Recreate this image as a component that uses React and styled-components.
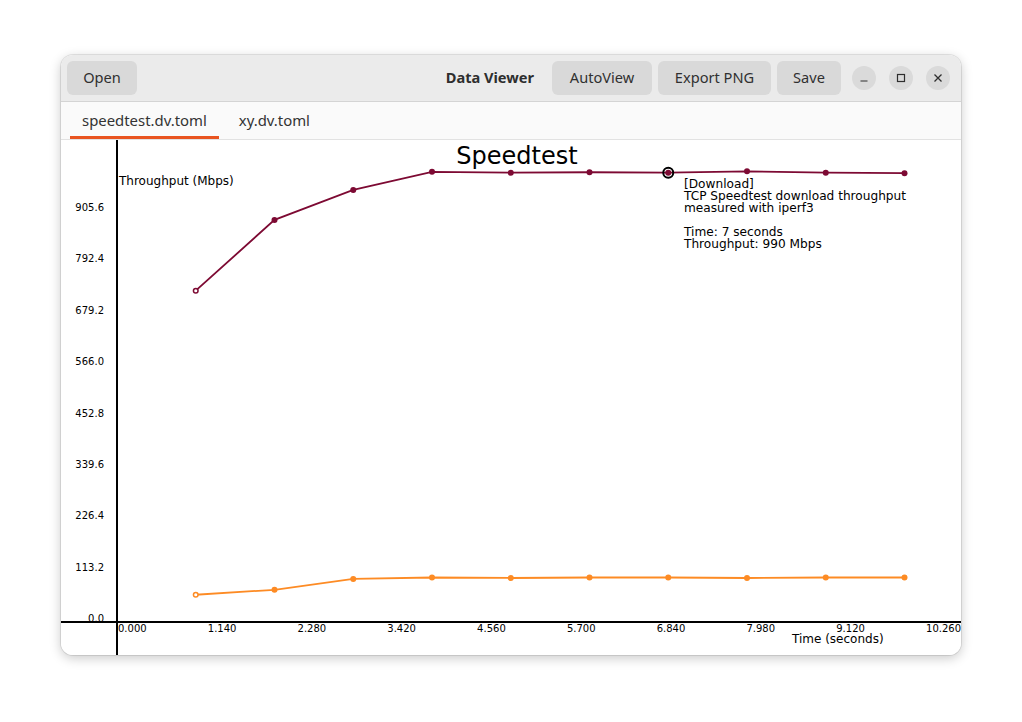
import React from 'react';
import styled, { createGlobalStyle } from 'styled-components';

const GlobalStyle = createGlobalStyle`
  html, body {
    margin: 0;
    padding: 0;
    background: #ffffff;
  }
`;

const Page = styled.div`
  width: 1022px;
  height: 722px;
  padding: 55px 61px 67px;
  box-sizing: border-box;
  font-family: 'Noto Sans', sans-serif;
`;

const Window = styled.div`
  width: 900px;
  height: 600px;
  border-radius: 12px;
  overflow: hidden;
  background: #ffffff;
  box-shadow: 0 0 0 1px rgba(0, 0, 0, 0.09), 0 3px 12px rgba(0, 0, 0, 0.22);
  display: flex;
  flex-direction: column;
`;

const HeaderBar = styled.div`
  height: 46px;
  flex: none;
  display: flex;
  align-items: center;
  padding: 0 11px 0 6px;
  background: #ebebeb;
  border-bottom: 1px solid #d4d4d4;
`;

const Button = styled.button`
  width: ${(p) => p.$w}px;
  height: 34px;
  padding: 0 0 2px;
  border: none;
  border-radius: 6px;
  background: #d9d9d9;
  color: #303030;
  font-family: 'Noto Sans', sans-serif;
  font-size: 14.6px;
  margin-left: ${(p) => p.$gap || 0}px;
`;

const Spacer = styled.div`
  flex: 1;
`;

const Title = styled.div`
  font-weight: 700;
  font-size: 14.6px;
  color: #2e2e2e;
  margin-right: 18px;
  padding-bottom: 2px;
`;

const Controls = styled.div`
  display: flex;
  gap: 13px;
  margin-left: 11px;
`;

const CircleBtn = styled.div`
  width: 24px;
  height: 24px;
  border-radius: 50%;
  background: #dadada;
  display: flex;
  align-items: center;
  justify-content: center;
`;

const TabBar = styled.div`
  height: 37px;
  flex: none;
  display: flex;
  gap: 8px;
  padding-left: 9px;
  background: #fafafa;
  border-bottom: 1px solid #e2e2e2;
`;

const Tab = styled.div`
  padding: 1px 12px 0;
  display: flex;
  align-items: center;
  font-size: 14.9px;
  color: #333333;
  border-bottom: 3px solid ${(p) => (p.$active ? '#e95420' : 'transparent')};
`;

const ChartArea = styled.div`
  flex: 1;
  position: relative;
  background: #ffffff;
`;

const download = [730, 886, 952, 992, 990, 991, 990, 993, 990, 989];
const upload = [60, 71, 95, 98, 97, 98, 98, 97, 98, 98];

const X0 = 56;
const Y0 = 482;
const XS = 78.75;
const YS = 51.375 / 113.2;

const px = (t) => X0 + t * XS;
const py = (v) => Y0 - v * YS;

const yTicks = ['0.0', '113.2', '226.4', '339.6', '452.8', '566.0', '679.2', '792.4', '905.6'];
const xTicks = ['0.000', '1.140', '2.280', '3.420', '4.560', '5.700', '6.840', '7.980', '9.120', '10.260'];

const Series = ({ data, color }) => {
  const pts = data.map((v, i) => `${px(i + 1)},${py(v)}`).join(' ');
  return (
    <g>
      <polyline points={pts} fill="none" stroke={color} strokeWidth="1.8" />
      {data.map((v, i) =>
        i === 0 ? (
          <circle key={i} cx={px(1)} cy={py(v)} r="2.3" fill="#fff" stroke={color} strokeWidth="1.5" />
        ) : (
          <circle key={i} cx={px(i + 1)} cy={py(v)} r="3" fill={color} />
        )
      )}
    </g>
  );
};

const Chart = () => (
  <svg width="900" height="515" style={{ display: 'block' }} fontFamily="'DejaVu Sans', sans-serif">
    <text x="456" y="24" fontSize="24" textAnchor="middle" fill="#000">Speedtest</text>
    <line x1="56" y1="0" x2="56" y2="515" stroke="#000" strokeWidth="2" />
    <line x1="0" y1="482" x2="900" y2="482" stroke="#000" strokeWidth="2" />
    {yTicks.map((t, i) => (
      <text key={t} x="43" y={Y0 - i * 51.375} fontSize="10" textAnchor="end" fill="#000">{t}</text>
    ))}
    {xTicks.map((t, i) => (
      <text key={t} x={X0 + 1 + i * 89.78} y="492" fontSize="10" fill="#000">{t}</text>
    ))}
    <text x="58" y="45" fontSize="12" fill="#000">Throughput (Mbps)</text>
    <text x="731" y="503" fontSize="12" fill="#000">Time (seconds)</text>
    <Series data={upload} color="#fd8b24" />
    <Series data={download} color="#7d0a33" />
    <circle cx={px(7)} cy={py(990)} r="5" fill="none" stroke="#000" strokeWidth="2" />
    <g fontSize="12.15" fill="#000">
      <text x="623" y="48">[Download]</text>
      <text x="623" y="60">TCP Speedtest download throughput</text>
      <text x="623" y="72">measured with iperf3</text>
      <text x="623" y="96">Time: 7 seconds</text>
      <text x="623" y="108">Throughput: 990 Mbps</text>
    </g>
  </svg>
);

const App = () => (
  <Page>
    <GlobalStyle />
    <Window>
      <HeaderBar>
        <Button $w={70}>Open</Button>
        <Spacer />
        <Title>Data Viewer</Title>
        <Button $w={100}>AutoView</Button>
        <Button $w={113} $gap={6}>Export PNG</Button>
        <Button $w={64} $gap={6}>Save</Button>
        <Controls>
          <CircleBtn>
            <svg width="10" height="10" viewBox="0 0 10 10">
              <line x1="1.5" y1="8" x2="8.5" y2="8" stroke="#2e2e2e" strokeWidth="1.2" />
            </svg>
          </CircleBtn>
          <CircleBtn>
            <svg width="10" height="10" viewBox="0 0 10 10">
              <rect x="1.5" y="1.5" width="7" height="7" fill="none" stroke="#2e2e2e" strokeWidth="1.2" />
            </svg>
          </CircleBtn>
          <CircleBtn>
            <svg width="10" height="10" viewBox="0 0 10 10">
              <path d="M1.5 1.5 L8.5 8.5 M8.5 1.5 L1.5 8.5" stroke="#2e2e2e" strokeWidth="1.3" />
            </svg>
          </CircleBtn>
        </Controls>
      </HeaderBar>
      <TabBar>
        <Tab $active>speedtest.dv.toml</Tab>
        <Tab>xy.dv.toml</Tab>
      </TabBar>
      <ChartArea>
        <Chart />
      </ChartArea>
    </Window>
  </Page>
);

export default App;
